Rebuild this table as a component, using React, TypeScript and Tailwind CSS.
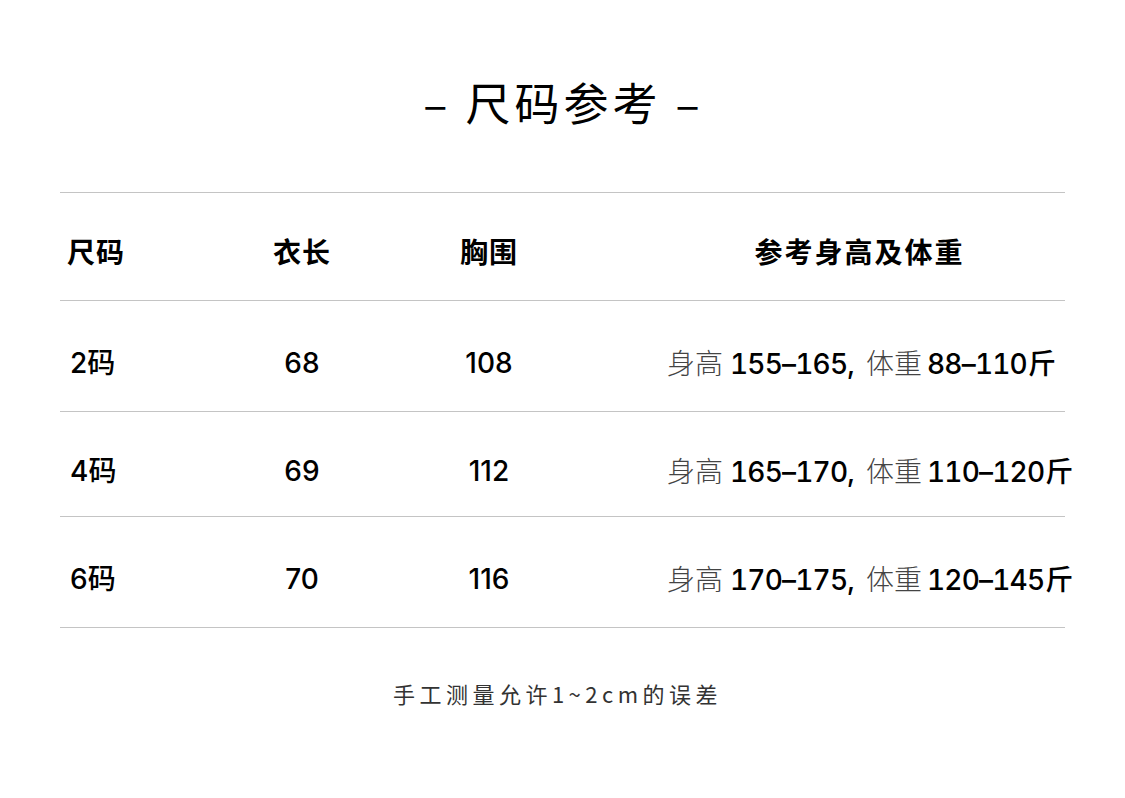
import React from "react";

const CJK = { fontFamily: '"Noto Sans CJK SC", sans-serif' };
const NUM = { fontFamily: 'Inter, "Noto Sans CJK SC", sans-serif' };

const rows = [
  { size: "2", len: "68", chest: "108", h: "155–165", w: "88–110", height: "h-[111px]" },
  { size: "4", len: "69", chest: "112", h: "165–170", w: "110–120", height: "h-[105px]" },
  { size: "6", len: "70", chest: "116", h: "170–175", w: "120–145", height: "h-[111px]" },
];

export default function App() {
  return (
    <div className="w-[1125px] h-[798px] bg-white text-black overflow-hidden" style={CJK}>
      <div className="h-[192px] flex justify-center pt-[74px]">
        <div className="text-[45px] leading-[56px] tracking-[4px] font-normal pl-[2px]" style={CJK}>
          – 尺码参考 –
        </div>
      </div>
      <div className="px-[60px]">
        <div className="border-t border-[#c4c4c4]">
          <div className="grid grid-cols-[150px_184px_190px_1fr] h-[108px] items-center border-b border-[#c4c4c4] text-[28px] font-bold pt-[8px]">
            <div className="pl-[7px] tracking-[1px]">尺码</div>
            <div className="text-center tracking-[1px]">衣长</div>
            <div className="text-center tracking-[1px]">胸围</div>
            <div className="pl-[70px] text-center tracking-[2px]">参考身高及体重</div>
          </div>
          {rows.map((r) => (
            <div
              key={r.size}
              className={`grid grid-cols-[150px_184px_190px_1fr] ${r.height} items-center border-b border-[#c4c4c4] text-[28px] pt-[14px]`}
            >
              <div className="pl-[10px] font-medium" style={NUM}>
                {r.size}码
              </div>
              <div className="text-center font-medium" style={NUM}>{r.len}</div>
              <div className="text-center font-medium" style={NUM}>{r.chest}</div>
              <div className="pl-[83px] whitespace-nowrap flex items-baseline">
                <span className="font-light text-[#444]" style={CJK}>身高</span>
                <span className="font-medium tabular-nums tracking-[-0.8px] ml-[7px]" style={NUM}>{r.h},</span>
                <span className="font-light text-[#444] ml-[12px]" style={CJK}>体重</span>
                <span className="font-medium tabular-nums tracking-[-0.8px] ml-[5px]" style={NUM}>{r.w}</span>
                <span className="font-medium ml-[1px]" style={CJK}>斤</span>
              </div>
            </div>
          ))}
        </div>
      </div>
      <div className="flex justify-center pt-[49px]">
        <div className="text-[22px] tracking-[4.5px] text-[#333] mr-[10px]" style={CJK}>
          手工测量允许1~2cm的误差
        </div>
      </div>
    </div>
  );
}
